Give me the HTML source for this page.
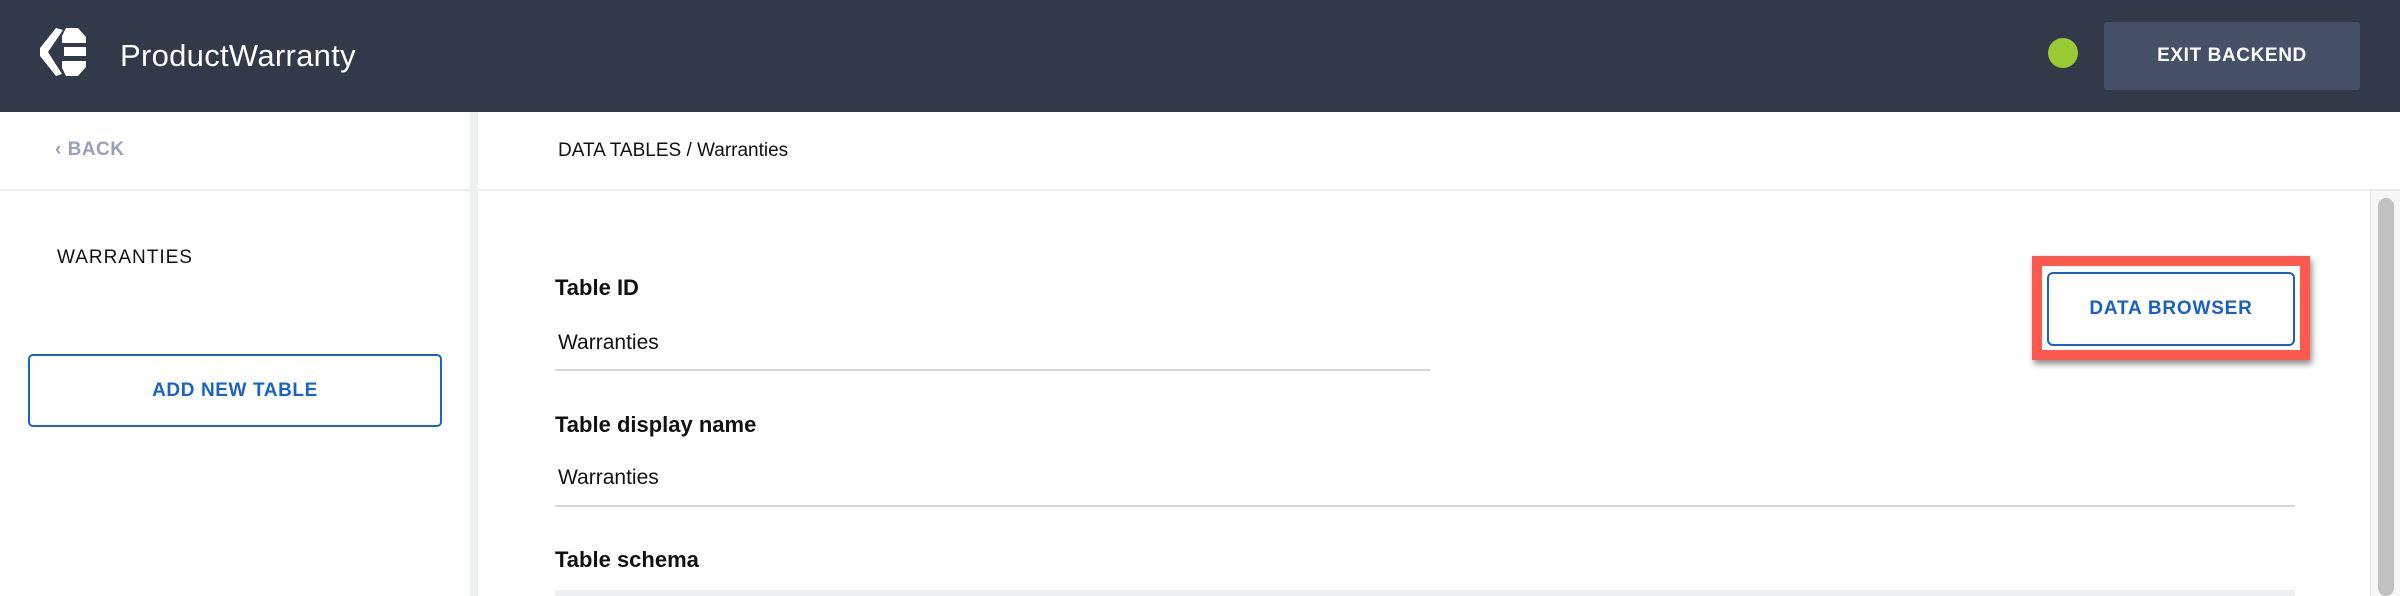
<!DOCTYPE html>
<html><head><meta charset="utf-8"><style>
*{margin:0;padding:0;box-sizing:border-box}
body{width:2400px;height:596px;overflow:hidden;background:#fff;font-family:"Liberation Sans",sans-serif;position:relative}
.top{position:absolute;left:0;top:0;width:2400px;height:112px;background:#323a4a}
.a{position:absolute;white-space:nowrap}
</style></head><body>
<div class="top"></div>
<svg class="a" style="left:40px;top:28px" width="47" height="48" viewBox="0 0 47 48">
<polygon fill="#fff" points="16,0 23,2 8,24 22,46 16,48 0,28 0,20"/>
<polygon fill="#fff" points="26,0 38,0 46,9 46,15 22,15 22,8"/>
<polygon fill="#fff" points="24,19 46,19 46,28 24,28"/>
<polygon fill="#fff" points="22,33 46,33 46,39 38,48 26,48 22,40"/>
</svg>
<div class="a" style="left:120px;top:40px;font-size:31px;color:#fff;line-height:32px;letter-spacing:0.3px">ProductWarranty</div>
<div class="a" style="left:2048px;top:38px;width:30px;height:30px;border-radius:50%;background:#9bcb32"></div>
<div class="a" style="left:2104px;top:22px;width:256px;height:68px;background:#465167;border-radius:4px;color:#fff;font-size:19px;font-weight:bold;letter-spacing:0.6px;line-height:68px;text-align:center">EXIT BACKEND</div>

<div class="a" style="left:0;top:189px;width:2400px;height:2px;background:#ececee"></div>
<div class="a" style="left:470px;top:112px;width:8px;height:484px;background:#eeeff1"></div>
<div class="a" style="left:55px;top:139px;font-size:19px;font-weight:bold;color:#99a0b8;line-height:22px;letter-spacing:0.5px">‹ BACK</div>
<div class="a" style="left:558px;top:140px;font-size:19px;color:#111;line-height:22px">DATA TABLES / Warranties</div>

<div class="a" style="left:57px;top:247px;font-size:19px;color:#111;line-height:22px;letter-spacing:1px">WARRANTIES</div>
<div class="a" style="left:28px;top:354px;width:414px;height:73px;border:2px solid #1a64c8;border-radius:5px;color:#1a64c8;font-size:19px;font-weight:bold;letter-spacing:0.6px;line-height:69px;text-align:center">ADD NEW TABLE</div>

<div class="a" style="left:555px;top:275px;font-size:22px;font-weight:bold;color:#111;line-height:26px">Table ID</div>
<div class="a" style="left:558px;top:331px;font-size:21px;color:#111;line-height:24px">Warranties</div>
<div class="a" style="left:555px;top:369px;width:875px;height:2px;background:#d6d6d8"></div>
<div class="a" style="left:555px;top:412px;font-size:22px;font-weight:bold;color:#111;line-height:26px">Table display name</div>
<div class="a" style="left:558px;top:466px;font-size:21px;color:#111;line-height:24px">Warranties</div>
<div class="a" style="left:555px;top:505px;width:1740px;height:2px;background:#d6d6d8"></div>
<div class="a" style="left:555px;top:547px;font-size:22px;font-weight:bold;color:#111;line-height:26px">Table schema</div>
<div class="a" style="left:555px;top:590px;width:1740px;height:6px;background:#eeeff1"></div>

<div class="a" style="left:2032px;top:256px;width:278px;height:104px;border:10px solid #fd5a4d;box-shadow:2px 4px 6px rgba(0,0,0,.45)"></div>
<div class="a" style="left:2047px;top:272px;width:248px;height:74px;border:2px solid #1a5fc8;border-radius:6px;color:#1a5fc8;font-size:19px;font-weight:bold;letter-spacing:0.8px;line-height:70px;text-align:center">DATA BROWSER</div>

<div class="a" style="left:2370px;top:191px;width:30px;height:405px;background:#f7f7f7;border-left:1px solid #e4e4e4"></div>
<div class="a" style="left:2378px;top:198px;width:16px;height:398px;background:#c1c1c1;border-radius:8px"></div>
</body></html>
